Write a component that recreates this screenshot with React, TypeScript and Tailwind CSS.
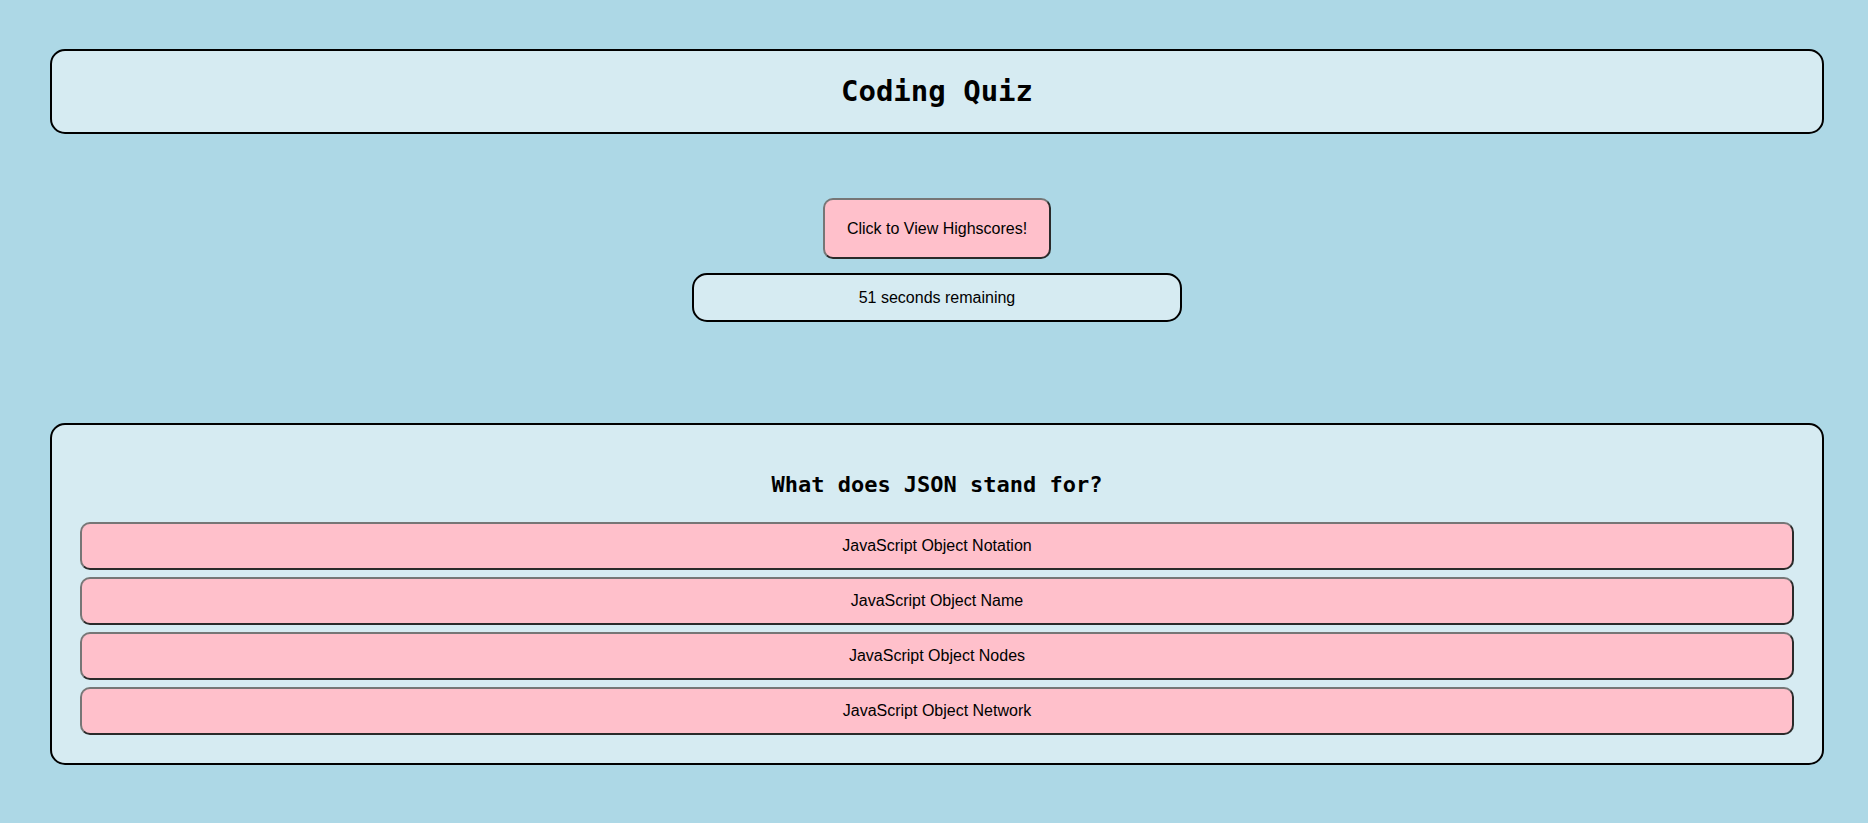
import React from 'react'

const answers = [
  'JavaScript Object Notation',
  'JavaScript Object Name',
  'JavaScript Object Nodes',
  'JavaScript Object Network',
]

const mono = "font-['DejaVu_Sans_Mono','Liberation_Mono',monospace]"
const sans = "font-['Liberation_Sans',Arial,sans-serif]"

export default function App() {
  return (
    <div className={`min-h-[823px] bg-[#add8e6] pt-[49px] pb-[58px] text-black ${sans}`}>
      {/* header */}
      <header className="ml-[50px] mr-[44px] flex h-[85px] items-center justify-center rounded-[15px] border-2 border-black bg-[#d6ebf2]">
        <h1 className={`${mono} text-[29px] font-bold leading-none`}>Coding Quiz</h1>
      </header>

      {/* highscores + timer */}
      <div className="ml-[50px] mr-[44px] flex flex-col items-center">
        <button className="mt-[64px] h-[61px] w-[228px] rounded-[10px] border-2 border-t-[#767676] border-l-[#767676] border-b-[#2a2a2a] border-r-[#2a2a2a] bg-[#ffc0cb] text-[16px]">
          Click to View Highscores!
        </button>
        <div className="mt-[14px] flex h-[49px] w-[490px] items-center justify-center rounded-[15px] border-2 border-black bg-[#d6ebf2] text-[16px]">
          51 seconds remaining
        </div>
      </div>

      {/* quiz */}
      <section className="ml-[50px] mr-[44px] mt-[101px] rounded-[15px] border-2 border-black bg-[#d6ebf2] px-[28px] pt-[44px] pb-[28px]">
        <h2 className={`${mono} h-[32px] text-center text-[22px] font-bold leading-[32px]`}>What does JSON stand for?</h2>
        <div className="mt-[21px] flex flex-col gap-[7px]">
          {answers.map(a => (
            <button
              key={a}
              className="h-[48px] w-full rounded-[10px] border-2 border-t-[#767676] border-l-[#767676] border-b-[#2a2a2a] border-r-[#2a2a2a] bg-[#ffc0cb] text-[16px]"
            >
              {a}
            </button>
          ))}
        </div>
      </section>
    </div>
  )
}
